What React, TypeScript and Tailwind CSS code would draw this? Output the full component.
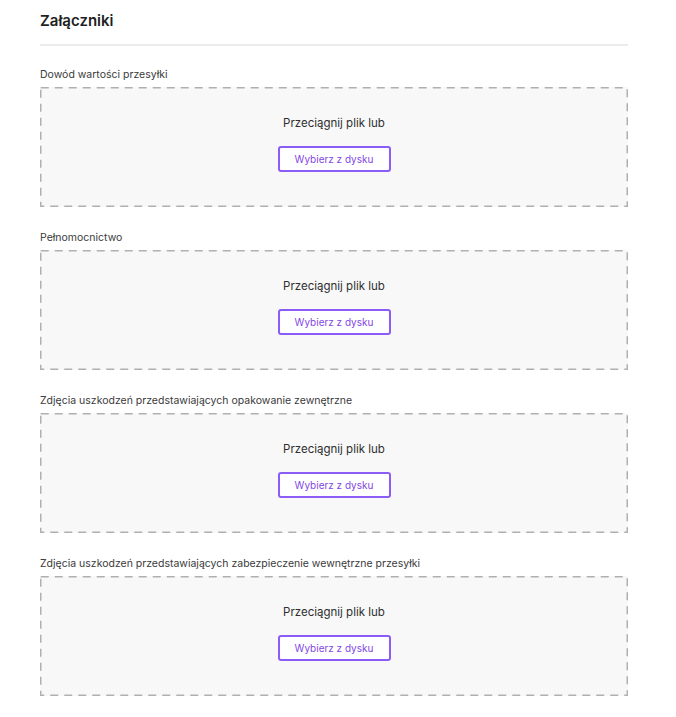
// Formularz załączników: pola do przeciągania plików z przyciskiem wyboru z dysku

const fields = [
  'Dowód wartości przesyłki',
  'Pełnomocnictwo',
  'Zdjęcia uszkodzeń przedstawiających opakowanie zewnętrzne',
  'Zdjęcia uszkodzeń przedstawiających zabezpieczenie wewnętrzne przesyłki',
];

function DropZone() {
  return (
    <div className="relative h-[120px] bg-[#f8f8f8] flex flex-col items-center pt-[28px]">
      {/* przerywana ramka z dłuższymi kreskami niż w border-dashed */}
      <svg className="absolute inset-0 w-full h-full pointer-events-none" preserveAspectRatio="none">
        <rect
          x="0.75"
          y="0.75"
          width="calc(100% - 1.5px)"
          height="calc(100% - 1.5px)"
          fill="none"
          stroke="#b0b0b0"
          strokeWidth="1.5"
          strokeDasharray="8 6"
        />
      </svg>
      <div className="text-[11.5px] leading-4 text-[#2f2f2f]">Przeciągnij plik lub</div>
      <button className="mt-[15px] w-[113px] h-[26px] border-2 border-[#8b5cf6] rounded-[3px] bg-white text-[10px] text-[#8247e5]">
        Wybierz z dysku
      </button>
    </div>
  );
}

export default function App() {
  return (
    <div className="min-h-screen bg-white font-['Inter',sans-serif]">
      <div className="ml-[40px] w-[588px] pt-[11px]">
        <h2 className="text-[15px] leading-5 font-semibold text-[#1f1f1f]">Załączniki</h2>
        <div className="mt-[13px] h-[2px] bg-[#ececec]" />
        <div className="mt-[22px] flex flex-col gap-[24px]">
          {fields.map(label => (
            <div key={label}>
              <div className="text-[10.5px] leading-[14px] text-[#3a3a3a] mb-[5px]">{label}</div>
              <DropZone />
            </div>
          ))}
        </div>
      </div>
    </div>
  );
}
